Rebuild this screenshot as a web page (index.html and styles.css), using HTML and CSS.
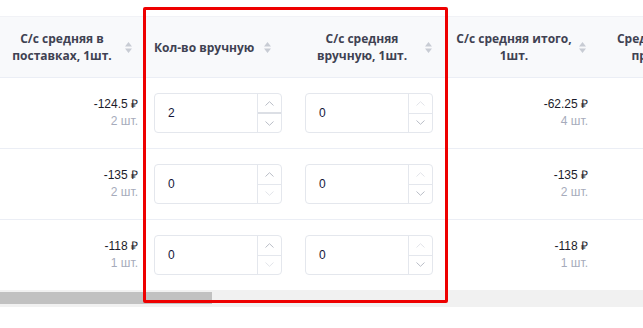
FILE: index.html
```html
<!DOCTYPE html>
<html lang="ru">
  <head>
    <meta charset="UTF-8" />
    <meta name="viewport" content="width=device-width, initial-scale=1.0" />
    <title>Себестоимость</title>
    <link rel="stylesheet" href="styles.css">
  </head>
  <body>
    <div class="cost_page">
      <div class="cost_table">
        <div class="cost_row cost_row-head">
          <div class="cost_th">
            <span class="cost_th-text">С/с средняя в поставках, 1шт.</span>
            <svg class="cost_sort" width="7" height="11" viewBox="0 0 7 11"><path d="M3.5 0 L7 4.5 H0 Z M3.5 11 L7 6.5 H0 Z" fill="#c8ccd4"/></svg>
          </div>
          <div class="cost_th cost_th-left">
            <span class="cost_th-text">Кол-во вручную</span>
            <svg class="cost_sort" width="7" height="11" viewBox="0 0 7 11"><path d="M3.5 0 L7 4.5 H0 Z M3.5 11 L7 6.5 H0 Z" fill="#c8ccd4"/></svg>
          </div>
          <div class="cost_th">
            <span class="cost_th-text">С/с средняя<br>вручную, 1шт.</span>
            <svg class="cost_sort" width="7" height="11" viewBox="0 0 7 11"><path d="M3.5 0 L7 4.5 H0 Z M3.5 11 L7 6.5 H0 Z" fill="#c8ccd4"/></svg>
          </div>
          <div class="cost_th">
            <span class="cost_th-text">С/с средняя итого, 1шт.</span>
            <svg class="cost_sort" width="7" height="11" viewBox="0 0 7 11"><path d="M3.5 0 L7 4.5 H0 Z M3.5 11 L7 6.5 H0 Z" fill="#c8ccd4"/></svg>
          </div>
          <div class="cost_th">
            <span class="cost_th-text">Средняя цена<br>продажи</span>
            <svg class="cost_sort" width="7" height="11" viewBox="0 0 7 11"><path d="M3.5 0 L7 4.5 H0 Z M3.5 11 L7 6.5 H0 Z" fill="#c8ccd4"/></svg>
          </div>
        </div>

        <div class="cost_row">
          <div class="cost_td cost_td-num cost_td-first">
            <div class="cost_value">-124.5 ₽</div>
            <div class="cost_count">2 шт.</div>
          </div>
          <div class="cost_td cost_td-input">
            <div class="num_input">
              <span class="num_input-value">2</span>
              <div class="num_input-spin">
                <span class="num_input-btn num_input-btn-up num_input-btn-hover"><svg width="9" height="5" viewBox="0 0 9 5"><path d="M0.5 4.5 L4.5 0.7 L8.5 4.5" fill="none" stroke="#b9bdc6"/></svg></span>
                <span class="num_input-btn"><svg width="9" height="5" viewBox="0 0 9 5"><path d="M0.5 0.5 L4.5 4.3 L8.5 0.5" fill="none" stroke="#b9bdc6"/></svg></span>
              </div>
            </div>
          </div>
          <div class="cost_td cost_td-input cost_td-input2">
            <div class="num_input">
              <span class="num_input-value">0</span>
              <div class="num_input-spin">
                <span class="num_input-btn num_input-btn-up"><svg width="9" height="5" viewBox="0 0 9 5"><path d="M0.5 4.5 L4.5 0.7 L8.5 4.5" fill="none" stroke="#e2e4e9"/></svg></span>
                <span class="num_input-btn"><svg width="9" height="5" viewBox="0 0 9 5"><path d="M0.5 0.5 L4.5 4.3 L8.5 0.5" fill="none" stroke="#b9bdc6"/></svg></span>
              </div>
            </div>
          </div>
          <div class="cost_td cost_td-num">
            <div class="cost_value">-62.25 ₽</div>
            <div class="cost_count">4 шт.</div>
          </div>
          <div class="cost_td"></div>
        </div>

        <div class="cost_row">
          <div class="cost_td cost_td-num cost_td-first">
            <div class="cost_value">-135 ₽</div>
            <div class="cost_count">2 шт.</div>
          </div>
          <div class="cost_td cost_td-input">
            <div class="num_input">
              <span class="num_input-value">0</span>
              <div class="num_input-spin">
                <span class="num_input-btn num_input-btn-up"><svg width="9" height="5" viewBox="0 0 9 5"><path d="M0.5 4.5 L4.5 0.7 L8.5 4.5" fill="none" stroke="#b9bdc6"/></svg></span>
                <span class="num_input-btn"><svg width="9" height="5" viewBox="0 0 9 5"><path d="M0.5 0.5 L4.5 4.3 L8.5 0.5" fill="none" stroke="#e2e4e9"/></svg></span>
              </div>
            </div>
          </div>
          <div class="cost_td cost_td-input cost_td-input2">
            <div class="num_input">
              <span class="num_input-value">0</span>
              <div class="num_input-spin">
                <span class="num_input-btn num_input-btn-up"><svg width="9" height="5" viewBox="0 0 9 5"><path d="M0.5 4.5 L4.5 0.7 L8.5 4.5" fill="none" stroke="#e2e4e9"/></svg></span>
                <span class="num_input-btn"><svg width="9" height="5" viewBox="0 0 9 5"><path d="M0.5 0.5 L4.5 4.3 L8.5 0.5" fill="none" stroke="#b9bdc6"/></svg></span>
              </div>
            </div>
          </div>
          <div class="cost_td cost_td-num">
            <div class="cost_value">-135 ₽</div>
            <div class="cost_count">2 шт.</div>
          </div>
          <div class="cost_td"></div>
        </div>

        <div class="cost_row cost_row-last">
          <div class="cost_td cost_td-num cost_td-first">
            <div class="cost_value">-118 ₽</div>
            <div class="cost_count">1 шт.</div>
          </div>
          <div class="cost_td cost_td-input">
            <div class="num_input">
              <span class="num_input-value">0</span>
              <div class="num_input-spin">
                <span class="num_input-btn num_input-btn-up"><svg width="9" height="5" viewBox="0 0 9 5"><path d="M0.5 4.5 L4.5 0.7 L8.5 4.5" fill="none" stroke="#b9bdc6"/></svg></span>
                <span class="num_input-btn"><svg width="9" height="5" viewBox="0 0 9 5"><path d="M0.5 0.5 L4.5 4.3 L8.5 0.5" fill="none" stroke="#e2e4e9"/></svg></span>
              </div>
            </div>
          </div>
          <div class="cost_td cost_td-input cost_td-input2">
            <div class="num_input">
              <span class="num_input-value">0</span>
              <div class="num_input-spin">
                <span class="num_input-btn num_input-btn-up"><svg width="9" height="5" viewBox="0 0 9 5"><path d="M0.5 4.5 L4.5 0.7 L8.5 4.5" fill="none" stroke="#e2e4e9"/></svg></span>
                <span class="num_input-btn"><svg width="9" height="5" viewBox="0 0 9 5"><path d="M0.5 0.5 L4.5 4.3 L8.5 0.5" fill="none" stroke="#b9bdc6"/></svg></span>
              </div>
            </div>
          </div>
          <div class="cost_td cost_td-num">
            <div class="cost_value">-118 ₽</div>
            <div class="cost_count">1 шт.</div>
          </div>
          <div class="cost_td"></div>
        </div>
      </div>

      <div class="cost_scroll">
        <div class="cost_scroll-thumb"></div>
      </div>

      <!-- highlight of the manual columns -->
      <div class="cost_highlight"></div>
    </div>
  </body>
</html>
```

FILE: styles.css
```css
body {
  margin: 0;
  background-color: #fff;
  color: #1d1e2c;
  font-family: "Liberation Sans", Arial, sans-serif;
  font-size: 12px;
}

.cost_page {
  position: relative;
  padding-top: 16px;
  overflow: hidden;
}

.cost_table {
  width: 736px;
}

.cost_row {
  display: grid;
  grid-template-columns: 144px 150px 150px 154px 138px;
  height: 71px;
  box-sizing: border-box;
  border-bottom: 1px solid #ebeef5;
}

.cost_row-last {
  height: 70px;
  border-bottom: none;
}

.cost_row-head {
  height: 62px;
  background-color: #f8f9fb;
  border-top: 1px solid #f1f2f6;
}

.cost_th {
  display: flex;
  align-items: center;
  gap: 5px;
  padding: 0 12px 0 10px;
  color: #3f4252;
  font-family: "Open Sans", sans-serif;
  font-size: 12px;
  font-weight: 700;
  line-height: 17px;
}

.cost_th:first-child {
  padding-left: 4px;
}

.cost_th-text {
  flex: 1;
  text-align: center;
}

.cost_th-left .cost_th-text {
  flex: none;
  text-align: left;
}

.cost_th-left {
  gap: 10px;
}

.cost_sort {
  flex: none;
  display: block;
}

.cost_td {
  display: flex;
  flex-direction: column;
  justify-content: center;
  padding: 0 10px;
}

.cost_td-num {
  align-items: flex-end;
  line-height: 17px;
}

.cost_td-first {
  padding-right: 6px;
}

.cost_value {
  color: #1b1c2a;
}

.cost_count {
  color: #a6abbb;
}

.cost_td-input {
  padding: 0 12px 0 10px;
}

.cost_td-input2 {
  padding: 0 11px 0 11px;
}

.num_input {
  display: flex;
  height: 40px;
  box-sizing: border-box;
  border: 1px solid #e4e7ed;
  border-radius: 4px;
  background-color: #fff;
}

.num_input-value {
  flex: 1;
  display: flex;
  align-items: center;
  padding-left: 13px;
  color: #15163a;
  font-size: 12px;
}

.num_input-spin {
  width: 23px;
  display: flex;
  flex-direction: column;
  border-left: 1px solid #e4e7ed;
}

.num_input-btn {
  flex: 1;
  display: flex;
  align-items: center;
  justify-content: center;
}

.num_input-btn svg {
  display: block;
}

.num_input-btn-up {
  border-bottom: 1px solid #e4e7ed;
}

.num_input-btn-hover {
  border-bottom: 2px solid #dcdfe5;
}

.cost_scroll {
  height: 17px;
  box-sizing: border-box;
  padding-top: 2px;
  background-color: #f1f1f1;
}

.cost_scroll-thumb {
  width: 212px;
  height: 12px;
  background-color: #c1c1c1;
}

.cost_highlight {
  position: absolute;
  left: 143px;
  top: 7px;
  width: 305px;
  height: 296px;
  box-sizing: border-box;
  border: 3px solid #ee0000;
  border-radius: 2px;
}
```
